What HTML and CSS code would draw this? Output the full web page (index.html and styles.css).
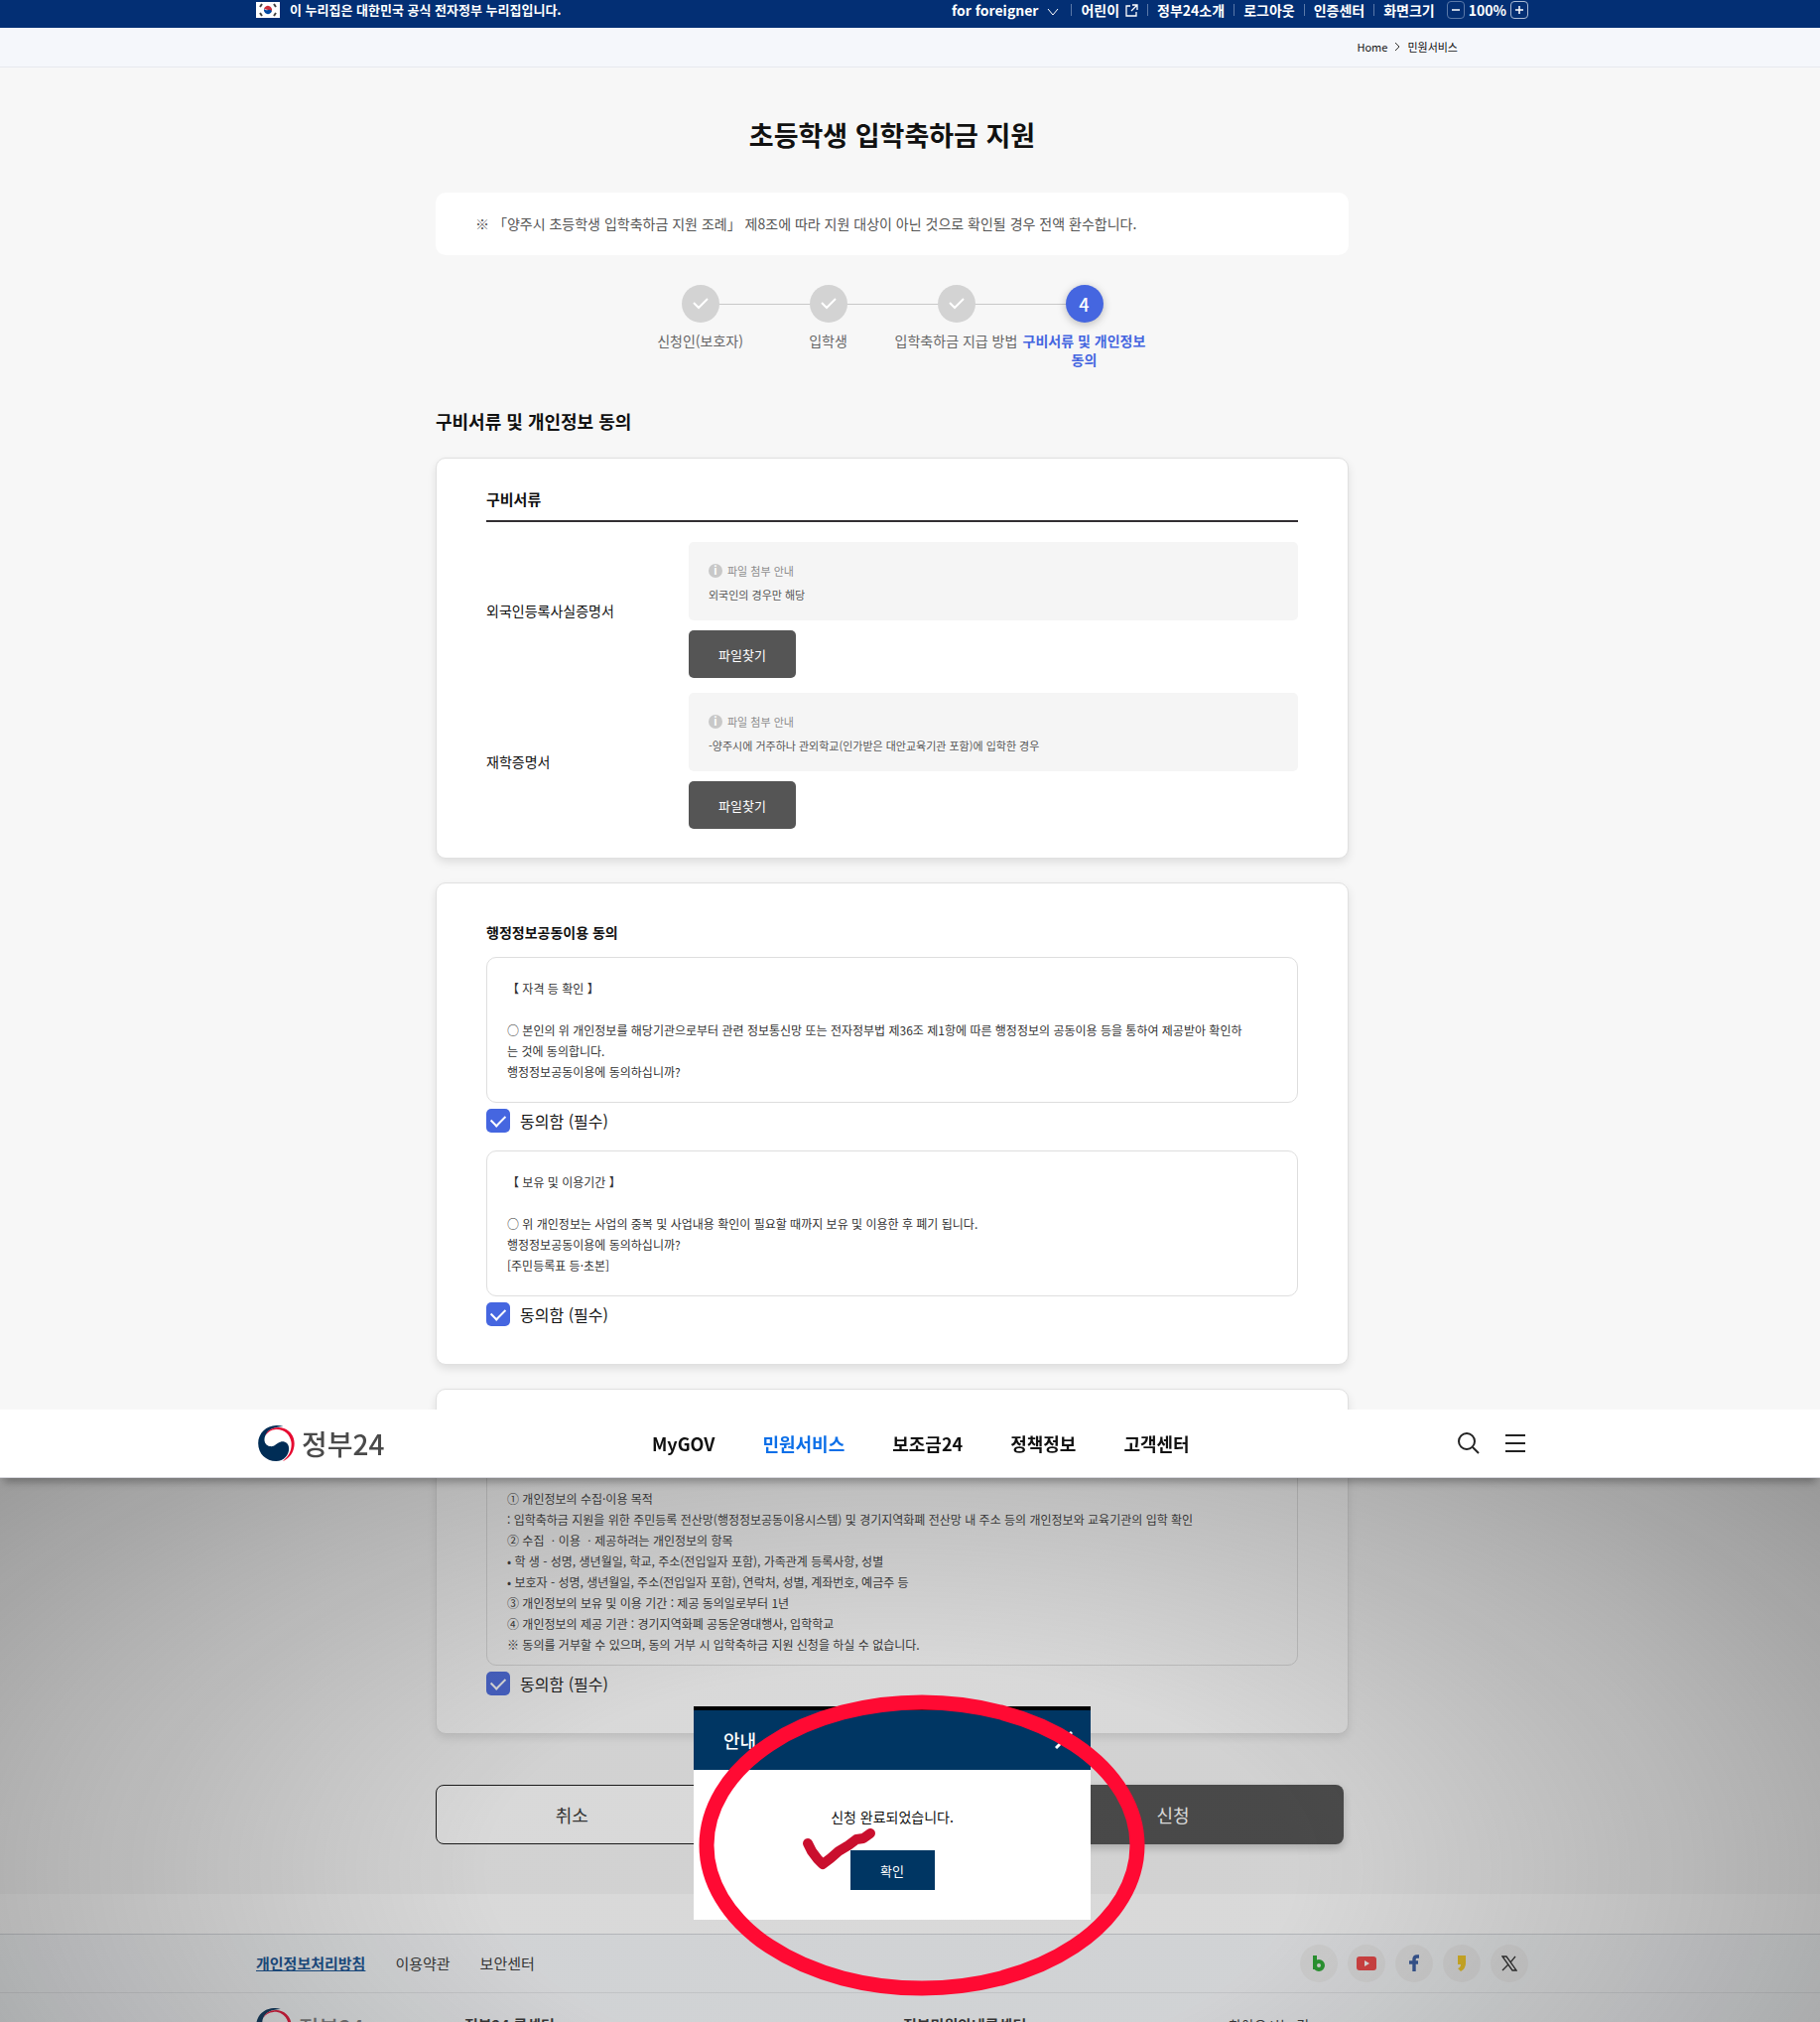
FILE: index.html
```html
<!DOCTYPE html>
<html lang="ko">
<head>
  <meta charset="UTF-8">
  <meta name="viewport" content="width=device-width, initial-scale=1.0">
  <title>초등학생 입학축하금 지원 | 정부24</title>
  <link rel="stylesheet" href="styles.css">
</head>
<body>
  <div class="topbar">
    <div class="inner">
      <p class="official">
        <svg width="24" height="16" viewBox="0 0 24 16">
          <rect width="24" height="16" fill="#fff"/>
          <path d="M8 7a4 4 0 0 1 8 2z" fill="#cd2e3a"/>
          <path d="M8 7a4 4 0 0 0 8 2q-2-2-4-1t-4-1z" fill="#0047a0"/>
          <path d="M4 5l2-3M18 2l2 3M4 11l2 3M18 14l2-3" stroke="#444" stroke-width="2"/>
        </svg>
        이 누리집은 대한민국 공식 전자정부 누리집입니다.
      </p>
      <ul class="util">
        <li><a href="#">for foreigner
          <svg class="down" width="12" height="8" viewBox="0 0 12 8"><path d="M1 1l5 6 5-6" fill="none" stroke="#fff"/></svg></a></li>
        <li><a href="#">어린이
          <svg width="13" height="13" viewBox="0 0 13 13"><path d="M5 2H1v10h10V8M7 1h5v5M12 1L6 7" fill="none" stroke="#fff" stroke-width="1.3"/></svg></a></li>
        <li><a href="#">정부24소개</a></li>
        <li><a href="#">로그아웃</a></li>
        <li><a href="#">인증센터</a></li>
        <li class="zoom">화면크기
          <button type="button" class="minus" aria-label="축소"><svg width="8" height="8" viewBox="0 0 8 8"><path d="M0 4h8" stroke="#fff" stroke-width="1.5"/></svg></button>
          <span>100%</span>
          <button type="button" aria-label="확대"><svg width="8" height="8" viewBox="0 0 8 8"><path d="M0 4h8M4 0v8" stroke="#fff" stroke-width="1.5"/></svg></button>
        </li>
      </ul>
    </div>
  </div>

  <div class="location">
    <div class="inner">
      <a href="#">Home</a>
      <svg width="6" height="10" viewBox="0 0 6 10"><path d="M1 1l4 4-4 4" fill="none" stroke="#333"/></svg>
      <a href="#">민원서비스</a>
    </div>
  </div>

  <main class="main">
    <div class="content">
      <h1>초등학생 입학축하금 지원</h1>
      <p class="notice">※ 「양주시 초등학생 입학축하금 지원 조례」 제8조에 따라 지원 대상이 아닌 것으로 확인될 경우 전액 환수합니다.</p>

      <ol class="steps">
        <li><span class="num"><svg width="16" height="12" viewBox="0 0 16 12"><path d="M1 5l5 5 9-9" fill="none" stroke="#fff" stroke-width="2"/></svg></span>신청인(보호자)</li>
        <li><span class="num"><svg width="16" height="12" viewBox="0 0 16 12"><path d="M1 5l5 5 9-9" fill="none" stroke="#fff" stroke-width="2"/></svg></span>입학생</li>
        <li><span class="num"><svg width="16" height="12" viewBox="0 0 16 12"><path d="M1 5l5 5 9-9" fill="none" stroke="#fff" stroke-width="2"/></svg></span>입학축하금 지급 방법</li>
        <li class="on"><span class="num">4</span>구비서류 및 개인정보 동의</li>
      </ol>

      <h2>구비서류 및 개인정보 동의</h2>

      <section class="card files">
        <h3>구비서류</h3>
        <div class="file-row">
          <span class="file-name">외국인등록사실증명서</span>
          <div class="file-body">
            <div class="guide">
              <p class="guide-title"><span class="info">i</span>파일 첨부 안내</p>
              <p>외국인의 경우만 해당</p>
            </div>
            <button type="button">파일찾기</button>
          </div>
        </div>
        <div class="file-row">
          <span class="file-name">재학증명서</span>
          <div class="file-body">
            <div class="guide">
              <p class="guide-title"><span class="info">i</span>파일 첨부 안내</p>
              <p>-양주시에 거주하나 관외학교(인가받은 대안교육기관 포함)에 입학한 경우</p>
            </div>
            <button type="button">파일찾기</button>
          </div>
        </div>
      </section>

      <section class="card agree">
        <h3>행정정보공동이용 동의</h3>
        <div class="terms">
          <p class="terms-title">【 자격 등 확인 】</p>
          <p>○ 본인의 위 개인정보를 해당기관으로부터 관련 정보통신망 또는 전자정부법 제36조 제1항에 따른 행정정보의 공동이용 등을 통하여 제공받아 확인하는 것에 동의합니다.</p>
          <p>행정정보공동이용에 동의하십니까?</p>
        </div>
        <label class="check"><input type="checkbox" checked>동의함 (필수)</label>
        <div class="terms">
          <p class="terms-title">【 보유 및 이용기간 】</p>
          <p>○ 위 개인정보는 사업의 중복 및 사업내용 확인이 필요할 때까지 보유 및 이용한 후 폐기 됩니다.</p>
          <p>행정정보공동이용에 동의하십니까?</p>
          <p>[주민등록표 등·초본]</p>
        </div>
        <label class="check"><input type="checkbox" checked>동의함 (필수)</label>
      </section>

      <section class="card agree">
        <div class="terms terms-long">
          <p>① 개인정보의 수집·이용 목적</p>
          <p>: 입학축하금 지원을 위한 주민등록 전산망(행정정보공동이용시스템) 및 경기지역화폐 전산망 내 주소 등의 개인정보와 교육기관의 입학 확인</p>
          <p>② 수집 ㆍ이용 ㆍ제공하려는 개인정보의 항목</p>
          <p>• 학 생 - 성명, 생년월일, 학교, 주소(전입일자 포함), 가족관계 등록사항, 성별</p>
          <p>• 보호자 - 성명, 생년월일, 주소(전입일자 포함), 연락처, 성별, 계좌번호, 예금주 등</p>
          <p>③ 개인정보의 보유 및 이용 기간 : 제공 동의일로부터 1년</p>
          <p>④ 개인정보의 제공 기관 : 경기지역화폐 공동운영대행사, 입학학교</p>
          <p>※ 동의를 거부할 수 있으며, 동의 거부 시 입학축하금 지원 신청을 하실 수 없습니다.</p>
        </div>
        <label class="check"><input type="checkbox" checked>동의함 (필수)</label>
      </section>

      <div class="actions">
        <button type="button" class="cancel">취소</button>
        <button type="submit" class="submit">신청</button>
      </div>
    </div>
  </main>

  <footer class="footer">
    <div class="footer-links">
      <div class="inner">
        <nav>
          <a href="#" class="privacy">개인정보처리방침</a>
          <a href="#">이용약관</a>
          <a href="#">보안센터</a>
        </nav>
        <div class="sns">
          <a href="#" aria-label="블로그"><svg width="14" height="18" viewBox="0 0 14 18"><path d="M3 1v14" stroke="#23a52b" stroke-width="4"/><circle cx="7" cy="11" r="4" fill="none" stroke="#23a52b" stroke-width="4"/></svg></a>
          <a href="#" aria-label="유튜브"><svg width="20" height="14" viewBox="0 0 20 14"><rect width="20" height="14" rx="3" fill="#f03f3f"/><path d="M8 4l5 3-5 3z" fill="#fff"/></svg></a>
          <a href="#" aria-label="페이스북"><svg width="10" height="18" viewBox="0 0 10 18"><path d="M10 2H8Q5 2 5 5v12M0 8h9" fill="none" stroke="#2f559e" stroke-width="3.4"/></svg></a>
          <a href="#" aria-label="카카오스토리"><svg width="10" height="16" viewBox="0 0 10 16"><path d="M1 0h8v8q0 5-5 8l-3-3q3-1 3-4H1z" fill="#f0c419"/></svg></a>
          <a href="#" aria-label="엑스"><svg width="16" height="16" viewBox="0 0 16 16"><path d="M1 1h4l10 14h-4zM14 1L9 7M7 9l-6 6" fill="none" stroke="#222" stroke-width="1.3"/></svg></a>
        </div>
      </div>
    </div>
    <div class="inner footer-info">
      <a href="#" class="logo logo-small">
        <svg width="36" height="35" viewBox="0 0 110 108">
          <path d="M76 3C38-9 0 16 0 54c0 32 24 54 54 54 24 0 39-18 39-38 0-16-14-24-26-20-14 4-18 16-32 13C20 60 15 44 22 30 30 12 50 4 76 3z" fill="#002d56"/>
          <path d="M22 30C30 10 56 1 78 9c25 9 37 36 29 62-5 18-17 30-33 37 18-14 29-34 26-58C96 26 78 11 54 12c-14 1-25 8-32 18z" fill="#e60a30"/>
        </svg>
        정부24
      </a>
      <strong class="call">정부24 콜센터</strong>
      <strong class="call-guide">정부민원안내콜센터</strong>
      <a href="#" class="map">찾아오시는 길</a>
    </div>
  </footer>

  <div class="layer">
    <header class="header">
      <div class="inner">
        <a href="#" class="logo">
          <svg width="37" height="36" viewBox="0 0 110 108">
            <path d="M76 3C38-9 0 16 0 54c0 32 24 54 54 54 24 0 39-18 39-38 0-16-14-24-26-20-14 4-18 16-32 13C20 60 15 44 22 30 30 12 50 4 76 3z" fill="#002d56"/>
            <path d="M22 30C30 10 56 1 78 9c25 9 37 36 29 62-5 18-17 30-33 37 18-14 29-34 26-58C96 26 78 11 54 12c-14 1-25 8-32 18z" fill="#e60a30"/>
          </svg>
          정부24
        </a>
        <nav class="gnb">
          <a href="#">MyGOV</a>
          <a href="#" class="on">민원서비스</a>
          <a href="#">보조금24</a>
          <a href="#">정책정보</a>
          <a href="#">고객센터</a>
        </nav>
        <div class="tools">
          <button type="button" aria-label="검색"><svg width="22" height="22" viewBox="0 0 22 22"><circle cx="9" cy="9" r="8" fill="none" stroke="#222" stroke-width="2"/><path d="M15 15l6 6" stroke="#222" stroke-width="2"/></svg></button>
          <button type="button" aria-label="전체메뉴"><svg width="20" height="20" viewBox="0 0 20 20"><path d="M0 2h20M0 10h20M0 18h20" stroke="#222" stroke-width="2"/></svg></button>
        </div>
      </div>
    </header>
    <div class="dim">
      <div class="modal" role="dialog" aria-labelledby="modal-title">
        <div class="modal-head">
          <h2 id="modal-title">안내</h2>
          <button type="button" aria-label="닫기"><svg width="18" height="18" viewBox="0 0 18 18"><path d="M1 1l16 16M17 1L1 17" stroke="#fff" stroke-width="3"/></svg></button>
        </div>
        <div class="modal-body">
          <p>신청 완료되었습니다.</p>
          <button type="button">확인</button>
        </div>
        <svg class="mark" width="450" height="304" viewBox="0 0 450 304">
          <path d="M110 150l4 8 6 8 5 5 8-6 8-7 10-6 8-6 7-1 7-5" fill="none" stroke="#ca0f2e" stroke-width="10" stroke-linecap="round" stroke-linejoin="round"/>
          <ellipse cx="225" cy="152" rx="217" ry="144" fill="none" stroke="#ff0a33" stroke-width="15"/>
        </svg>
      </div>
    </div>
  </div>
</body>
</html>
```
FILE: styles.css
```css
* {
  box-sizing: border-box;
  margin: 0;
  padding: 0;
}

html,
body {
  height: 100%;
}

body {
  font-family: "Noto Sans CJK KR", "Noto Sans", sans-serif;
  font-size: 14px;
  line-height: 20px;
  color: #111;
  background-color: #fff;
  overflow: hidden;
}

a {
  color: inherit;
  text-decoration: none;
}

ul,
ol {
  list-style: none;
}

button {
  font-family: inherit;
  border: none;
  cursor: pointer;
}

svg {
  display: block;
}

/* every full width band keeps the same gutter on the right */
.topbar,
.location,
.main,
.footer-links,
.footer-info,
.header,
.dim {
  padding-right: 36px;
}

.inner {
  display: flex;
  align-items: center;
  max-width: 1282px;
  margin: 0 auto;
}

/* top bar */
.topbar {
  height: 28px;
  background-color: #032f74;
  color: #fff;
  font-weight: bold;
}

.topbar .inner {
  justify-content: space-between;
  height: 20px;
}

.official {
  display: flex;
  align-items: center;
  gap: 10px;
  font-size: 13px;
}

.util,
.util li,
.util a {
  display: flex;
  align-items: center;
}

.util li + li::before {
  content: "";
  width: 1px;
  height: 12px;
  margin: 0 9px;
  background-color: #5b79a8;
}

.util a {
  gap: 6px;
}

.util .down {
  margin: 4px 3px 0;
}

.zoom button {
  display: flex;
  align-items: center;
  justify-content: center;
  width: 18px;
  height: 18px;
  border: 1px solid #a9b9d3;
  border-radius: 4px;
  background: none;
}

.zoom .minus {
  margin-left: 12px;
  border-color: #5b79a8;
}

.zoom span {
  margin: 0 4px;
}

.location {
  height: 40px;
  border-bottom: 1px solid #e6e9ee;
  background-color: #f5f7fb;
  font-size: 11px;
}

.location .inner {
  justify-content: flex-end;
  gap: 7px;
  height: 38px;
  padding-right: 71px;
}

/* content */
.main {
  padding-bottom: 50px;
  background-color: #f7f7f7;
}

.content {
  max-width: 920px;
  margin: 0 auto;
}

h1 {
  padding-top: 48px;
  font-size: 27px;
  line-height: 40px;
  text-align: center;
}

.notice {
  margin-top: 38px;
  padding: 21px 40px 22px;
  border-radius: 10px;
  background-color: #fff;
  color: #555;
}

.steps {
  display: flex;
  justify-content: center;
  margin-top: 30px;
}

.steps li {
  position: relative;
  display: flex;
  flex-direction: column;
  align-items: center;
  gap: 9px;
  width: 129px;
  line-height: 19px;
  text-align: center;
  word-break: keep-all;
  color: #666;
}

.steps li + li::before {
  content: "";
  position: absolute;
  top: 19px;
  right: 50%;
  width: 100%;
  height: 1px;
  background-color: #c8c8c8;
}

.steps .num {
  position: relative;
  z-index: 1;
  display: flex;
  align-items: center;
  justify-content: center;
  width: 38px;
  height: 38px;
  border-radius: 50%;
  background-color: #d3d3d3;
  color: #fff;
  font-size: 18px;
}

/* the line of the next step must stay under this circle */
.steps li:not(.on) .num {
  z-index: 2;
}

.steps .on {
  color: #4566e0;
  font-weight: bold;
}

.steps .on .num {
  background-color: #4566e0;
  box-shadow: 0 2px 8px rgba(0, 0, 0, 0.25);
  font-weight: 500;
}

.content > h2 {
  margin-top: 39px;
  font-size: 18px;
  line-height: 26px;
}

.card {
  margin-top: 24px;
  padding: 38px 50px;
  border: 1px solid #e0e0e0;
  border-radius: 10px;
  background-color: #fff;
  box-shadow: 0 4px 8px rgba(0, 0, 0, 0.1);
}

.files {
  padding: 30px 50px 29px;
}

.files h3 {
  padding-bottom: 10px;
  border-bottom: 2px solid #332f33;
  font-size: 15px;
  line-height: 22px;
}

.file-row {
  display: grid;
  grid-template-columns: 204px 1fr;
  align-items: center;
  margin-top: 15px;
}

.files h3 + .file-row {
  margin-top: 20px;
}

.guide {
  padding: 17px 20px 14px;
  border-radius: 5px;
  background-color: #f5f5f5;
  color: #555;
  font-size: 11px;
  line-height: 24px;
}

.guide-title {
  display: flex;
  align-items: center;
  gap: 5px;
  color: #8c8c8c;
}

.info {
  width: 14px;
  height: 14px;
  border-radius: 50%;
  background-color: #c8c8c8;
  color: #fff;
  font-weight: bold;
  line-height: 13px;
  text-align: center;
}

.file-body button {
  width: 108px;
  height: 48px;
  margin-top: 10px;
  border-radius: 5px;
  background-color: #555;
  color: #fff;
  font-size: 13px;
}

/* consent boxes */
.agree h3 {
  margin-bottom: 14px;
  font-size: 14px;
  line-height: 22px;
}

.terms {
  padding: 20px 52px 20px 20px;
  border: 1px solid #dedede;
  border-radius: 10px;
  color: #333;
  font-size: 12px;
  line-height: 21px;
}

.terms-title {
  margin-bottom: 21px;
}

.terms-long {
  padding-top: 60px;
  padding-bottom: 10px;
}

.check {
  display: flex;
  align-items: center;
  gap: 10px;
  margin-top: 6px;
  font-size: 16px;
  line-height: 24px;
}

.check + .terms {
  margin-top: 18px;
}

.check input {
  display: flex;
  align-items: center;
  justify-content: center;
  width: 24px;
  height: 24px;
  border-radius: 5px;
  background-color: #4566e0;
  appearance: none;
}

.check input::before {
  content: "";
  width: 12px;
  height: 7px;
  margin-bottom: 4px;
  border: solid #fff;
  border-width: 0 0 2px 2px;
  transform: rotate(-45deg);
}

.actions {
  display: flex;
  justify-content: space-between;
  margin: 51px 5px 0 0;
}

.actions button {
  height: 60px;
  border-radius: 8px;
  font-size: 18px;
}

.actions .cancel {
  width: 30%;
  border: 1px solid #111;
  background-color: #fff;
  color: #333;
}

.actions .submit {
  width: 344px;
  background-color: #4c4c4c;
  color: #fff;
  box-shadow: 0 4px 8px rgba(0, 0, 0, 0.2);
}

/* footer */
.footer {
  margin-top: 40px;
  border-top: 1px solid #d0d3d8;
  background-color: #f6f8fa;
  color: #333;
  font-size: 15px;
}

.footer-links {
  border-bottom: 1px solid #e2e4e7;
}

.footer-links .inner {
  justify-content: space-between;
  height: 58px;
}

.footer nav,
.sns {
  display: flex;
  gap: 30px;
}

.footer .privacy {
  color: #0b4a8f;
  font-weight: bold;
  text-decoration: underline;
}

.sns {
  gap: 10px;
}

.sns a {
  display: flex;
  align-items: center;
  justify-content: center;
  width: 38px;
  height: 38px;
  border-radius: 50%;
  background-color: #eee;
}

.footer-info {
  align-items: flex-start;
  max-width: 1318px;
  padding-top: 15px;
  line-height: 34px;
}

.logo {
  display: flex;
  align-items: center;
  gap: 7px;
  width: 399px;
  color: #4a4a4a;
  font-size: 28px;
  font-weight: 500;
}

.logo-small {
  width: 210px;
  color: #777;
  font-size: 22px;
}

.call {
  width: 442px;
}

.call-guide {
  width: 328px;
}

.map {
  font-size: 14px;
}

/* sticky header and the dialog under it */
.layer {
  position: fixed;
  right: 0;
  bottom: 0;
  left: 0;
  z-index: 10;
}

.header {
  position: relative;
  z-index: 1;
  border-bottom: 1px solid #d8d8de;
  background-color: #fff;
  box-shadow: 0 8px 8px -4px rgba(0, 0, 0, 0.3);
}

.header .inner {
  height: 68px;
}

.header .logo {
  padding-left: 2px;
}

.gnb {
  display: flex;
  flex: 1;
  gap: 48px;
  font-size: 18px;
  font-weight: bold;
}

.gnb .on {
  color: #0b6fe8;
}

.tools {
  display: flex;
  align-items: center;
  gap: 26px;
  padding-right: 3px;
}

.tools button {
  background: none;
}

.dim {
  display: flex;
  justify-content: center;
  height: 548px;
  padding-top: 230px;
  background: radial-gradient(900px 450px at 49% 72%, rgba(64, 64, 64, 0.2) 45%, rgba(64, 64, 64, 0.38) 100%, rgba(64, 64, 64, 0.52) 138%);
}

.modal {
  position: relative;
  align-self: flex-start;
  width: 400px;
  border-top: 4px solid #000;
  background-color: #fff;
}

.modal-head {
  display: flex;
  align-items: center;
  justify-content: space-between;
  height: 60px;
  padding: 0 18px 0 30px;
  background-color: #003663;
  color: #fff;
}

.modal-head h2 {
  font-size: 18px;
  font-weight: 500;
}

.modal-head button {
  background: none;
}

.modal-body {
  padding: 37px 20px 30px;
  text-align: center;
}

.modal-body button {
  width: 85px;
  height: 40px;
  margin-top: 24px;
  background-color: #003663;
  color: #fff;
  font-size: 13px;
}

/* red circle and tick drawn over the dialog */
.mark {
  position: absolute;
  top: -16px;
  left: 5px;
  pointer-events: none;
}
```
